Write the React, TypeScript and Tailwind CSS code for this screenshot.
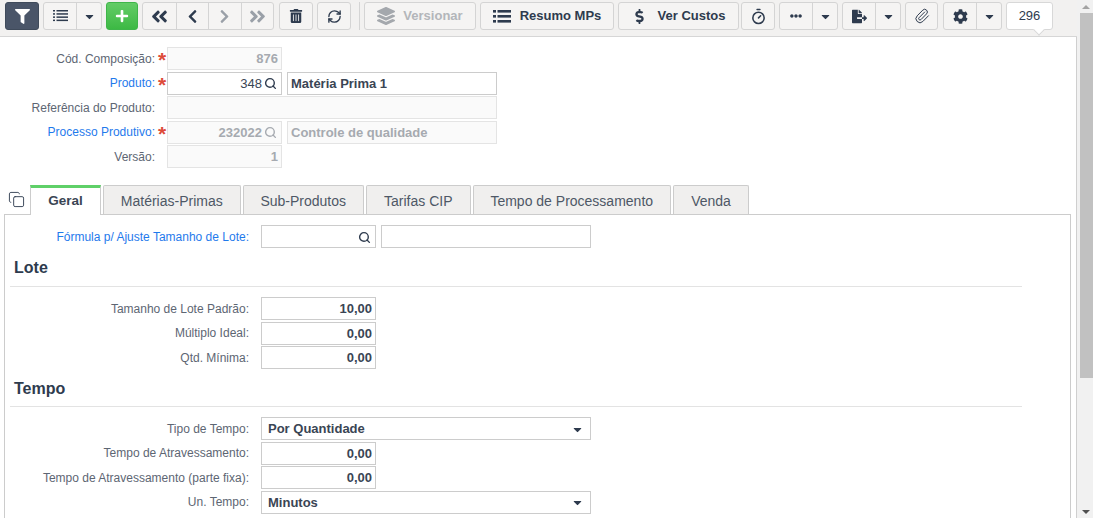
import React from "react";
import { FaFilter, FaPlus, FaAngleDoubleLeft, FaAngleDoubleRight, FaChevronLeft, FaChevronRight, FaTrashAlt, FaLayerGroup, FaDollarSign, FaEllipsisH, FaFileExport, FaCog, FaCaretDown } from "react-icons/fa";
import { Search, Timer, Paperclip, Copy, RefreshCw } from "lucide-react";

const DARK = "#2e3b4e";

function ListIcon({ w = 15, h = 12, sw = 1.5 }: { w?: number; h?: number; sw?: number }) {
  return (
    <svg width={w} height={h} viewBox="0 0 15 12" fill={DARK}>
      {[0, 3.2, 6.4, 9.6].map((y) => (
        <g key={y}>
          <rect x="0" y={y} width="2" height={sw} />
          <rect x="3.5" y={y} width="11.5" height={sw} />
        </g>
      ))}
    </svg>
  );
}

function ThickList() {
  return (
    <svg width="18" height="13" viewBox="0 0 18 13" fill={DARK}>
      {[0, 5, 10].map((y) => (
        <g key={y}>
          <rect x="0" y={y} width="3" height="2.6" />
          <rect x="4.5" y={y} width="13.5" height="2.6" />
        </g>
      ))}
    </svg>
  );
}

function Btn({ w, children, className = "" }: { w: string; children?: React.ReactNode; className?: string }) {
  return (
    <div className={`${w} h-[28px] flex items-center justify-center border border-[#d4d4d4] rounded-[3px] bg-[#f5f4f3] text-[#2e3b4e] ${className}`}>
      {children}
    </div>
  );
}

function Group({ items }: { items: { w: string; node: React.ReactNode }[] }) {
  return (
    <div className="h-[28px] flex border border-[#d4d4d4] rounded-[3px] bg-[#f5f4f3] text-[#2e3b4e]">
      {items.map((it, i) => (
        <div key={i} className={`${it.w} h-full flex items-center justify-center ${i > 0 ? "border-l border-[#d4d4d4]" : ""}`}>
          {it.node}
        </div>
      ))}
    </div>
  );
}

const caret = <FaCaretDown size={13} color={DARK} />;

function Toolbar() {
  return (
    <div className="h-[37px] bg-[#f2f1f0] border-b border-[#d6d6d6] flex items-start pt-[2px] pl-[5px] shrink-0">
      <Btn w="w-[34px]" className="!bg-[#4a5568] !border-[#3f4a5a]"><FaFilter size={15} color="#ffffff" /></Btn>
      <div className="ml-[4px]">
        <Group items={[{ w: "w-[32px]", node: <ListIcon /> }, { w: "w-[25px]", node: caret }]} />
      </div>
      <div className="ml-[4px] w-[32px] h-[28px] flex items-center justify-center rounded-[3px] border border-[#3fb54a] bg-gradient-to-b from-[#62cc66] to-[#3cb944]">
        <FaPlus size={14} color="#ffffff" />
      </div>
      <div className="ml-[4px]">
        <Group
          items={[
            { w: "w-[32.5px]", node: <FaAngleDoubleLeft size={19} color={DARK} /> },
            { w: "w-[32.5px]", node: <FaChevronLeft size={15} color={DARK} /> },
            { w: "w-[32.5px]", node: <FaChevronRight size={15} color="#9aa0a8" /> },
            { w: "w-[32.5px]", node: <FaAngleDoubleRight size={19} color="#9aa0a8" /> },
          ]}
        />
      </div>
      <Btn w="w-[34px]" className="ml-[5px]"><FaTrashAlt size={14} color={DARK} /></Btn>
      <Btn w="w-[34px]" className="ml-[4px]"><RefreshCw size={15} color={DARK} strokeWidth={2.2} /></Btn>
      <div className="ml-[8px] w-px h-[28px] bg-[#d4d4d4]" />
      <Btn w="w-[112px]" className="ml-[4px] gap-[8px]">
        <FaLayerGroup size={18} color="#a4a8ad" />
        <span className="text-[13px] font-bold text-[#b3b6ba]">Versionar</span>
      </Btn>
      <Btn w="w-[134px]" className="ml-[4px] gap-[9px]">
        <ThickList />
        <span className="text-[13px] font-bold">Resumo MPs</span>
      </Btn>
      <Btn w="w-[121px]" className="ml-[4px] gap-[11px]">
        <FaDollarSign size={15} color={DARK} />
        <span className="text-[13px] font-bold">Ver Custos</span>
      </Btn>
      <Btn w="w-[34px]" className="ml-[2px]"><Timer size={17} color={DARK} strokeWidth={2.2} /></Btn>
      <div className="ml-[4px]">
        <Group items={[{ w: "w-[32px]", node: <FaEllipsisH size={12} color={DARK} /> }, { w: "w-[25px]", node: caret }]} />
      </div>
      <div className="ml-[4px]">
        <Group items={[{ w: "w-[32px]", node: <FaFileExport size={15} color={DARK} /> }, { w: "w-[25px]", node: caret }]} />
      </div>
      <Btn w="w-[33px]" className="ml-[4px]"><Paperclip size={16} color={DARK} strokeWidth={1.5} /></Btn>
      <div className="ml-[5px]">
        <Group items={[{ w: "w-[32px]", node: <FaCog size={15} color={DARK} /> }, { w: "w-[25px]", node: caret }]} />
      </div>
      <div className="relative ml-[4px] w-[47px] h-[28px] bg-white border border-[#d8d8d8] rounded-[3px] flex items-center justify-center text-[13px] text-[#2e3b4e]">
        296
        <div className="absolute left-[28px] top-[23px] w-[8px] h-[8px] rotate-45 bg-white border-r border-b border-[#d8d8d8]" />
      </div>
    </div>
  );
}

function Star() {
  return <span className="text-[#dd4b39] text-[21px] font-bold leading-none w-[9px] h-[19px] ml-[3px] block">*</span>;
}

function Lbl({ text, w, blue, star }: { text: string; w: string; blue?: boolean; star?: boolean }) {
  return (
    <div className={`${w} shrink-0 flex justify-end items-center`}>
      <span className={`text-[12px] ${blue ? "text-[#1f7aec]" : "text-[#5d6673]"}`}>{text}:</span>
      {star !== undefined && (star ? <Star /> : <span className="w-[12px]" />)}
    </div>
  );
}

function Field({ w, value, left, disabled, search, className = "" }: { w: string; value?: string; left?: boolean; disabled?: boolean; search?: boolean; className?: string }) {
  return (
    <div
      className={`${w} h-full shrink-0 flex items-center border text-[13px] font-bold pt-[1px] ${left ? "justify-start pl-[3px]" : "justify-end pr-[3px]"} ${
        disabled ? "bg-[#fafafa] border-[#e4e4e4] text-[#a6aab0]" : "bg-white border-[#cccccc] text-[#3a4554]"
      } ${className}`}
    >
      <span>{value}</span>
      {search && <Search size={13} strokeWidth={2.6} className="ml-[2px] mr-[1px]" color={disabled ? "#a6aab0" : "#2e3b4e"} />}
    </div>
  );
}

function Select({ value }: { value: string }) {
  return (
    <div className="w-[330px] h-full flex items-center justify-between border border-[#cccccc] bg-white pt-[1px] pl-[6px] pr-[6px] text-[13px] font-bold text-[#3a4554]">
      <span>{value}</span>
      <FaCaretDown size={13} color={DARK} />
    </div>
  );
}

function TopForm() {
  const row = "flex h-[23px] mb-[1.5px]";
  return (
    <div className="pt-[10px] h-[147px] shrink-0">
      <div className={row}>
        <Lbl w="w-[167px]" text="Cód. Composição" star />
        <Field w="w-[115px]" value="876" disabled />
      </div>
      <div className={row}>
        <Lbl w="w-[167px]" text="Produto" blue star />
        <Field w="w-[115px]" value="348" search className="!font-normal" />
        <Field w="w-[210px]" value="Matéria Prima 1" left className="ml-[5px]" />
      </div>
      <div className={row}>
        <Lbl w="w-[167px]" text="Referência do Produto" star={false} />
        <Field w="w-[330px]" disabled />
      </div>
      <div className={row}>
        <Lbl w="w-[167px]" text="Processo Produtivo" blue star />
        <Field w="w-[115px]" value="232022" search disabled />
        <Field w="w-[210px]" value="Controle de qualidade" left disabled className="ml-[5px]" />
      </div>
      <div className={row}>
        <Lbl w="w-[167px]" text="Versão" star={false} />
        <Field w="w-[115px]" value="1" disabled />
      </div>
    </div>
  );
}

function Tab({ w, text, active }: { w: string; text: string; active?: boolean }) {
  return active ? (
    <div className={`${w} h-[30px] -mb-px bg-white border-x border-[#cccccc] border-t-[3px] border-t-[#5fd068] flex items-center justify-center text-[13.5px] font-bold text-[#3a4554] z-10`}>
      {text}
    </div>
  ) : (
    <div className={`${w} h-[29px] pt-[2px] bg-[#f0efee] border border-b-0 border-[#cccccc] rounded-t-[2px] flex items-center justify-center text-[14px] text-[#4e5866]`}>
      {text}
    </div>
  );
}

function Heading({ text, h }: { text: string; h: string }) {
  return (
    <div className={`ml-[5px] w-[1012px] ${h} border-b border-[#e3e3e3] pl-[4px] text-[16px] leading-[26px] font-bold text-[#2e3b4e]`}>
      {text}
    </div>
  );
}

function PanelRow({ label, blue, children }: { label: string; blue?: boolean; children: React.ReactNode }) {
  return (
    <div className="flex h-[23px] mb-[1.5px]">
      <div className="w-[244px] shrink-0 flex justify-end items-center">
        <span className={`text-[12px] ${blue ? "text-[#1f7aec]" : "text-[#5d6673]"}`}>{label}:</span>
      </div>
      <div className="ml-[12px] flex h-full">{children}</div>
    </div>
  );
}

export default function App() {
  return (
    <div className="w-[1093px] h-[518px] overflow-hidden flex bg-white font-['Liberation_Sans',Arial,sans-serif]">
      <div className="w-[1077px] h-full flex flex-col shrink-0 relative">
        <Toolbar />
        <div className="flex-1 border-r border-[#cfcfcf] flex flex-col min-h-0">
          <TopForm />
          <div className="flex items-end h-[30px] pl-[4px] shrink-0">
            <div className="w-[26px] h-[29px] flex items-start pt-[6px] pl-[4px]">
              <Copy size={17} color={DARK} strokeWidth={1.3} />
            </div>
            <Tab w="w-[71px]" text="Geral" active />
            <div className="ml-[2px] flex gap-[2.5px] items-end">
              <Tab w="w-[137.5px]" text="Matérias-Primas" />
              <Tab w="w-[120.5px]" text="Sub-Produtos" />
              <Tab w="w-[104.5px]" text="Tarifas CIP" />
              <Tab w="w-[197.5px]" text="Tempo de Processamento" />
              <Tab w="w-[76px]" text="Venda" />
            </div>
          </div>
          <div className="ml-[4px] w-[1067px] flex-1 border border-b-0 border-[#cccccc] pt-[10px] min-h-0 overflow-hidden">
            <PanelRow label="Fórmula p/ Ajuste Tamanho de Lote" blue>
              <Field w="w-[115px]" search />
              <Field w="w-[210px]" className="ml-[5px]" />
            </PanelRow>
            <div className="mt-[7px]">
              <Heading text="Lote" h="h-[32px]" />
            </div>
            <div className="mt-[10px]">
              <PanelRow label="Tamanho de Lote Padrão"><Field w="w-[115px]" value="10,00" /></PanelRow>
              <PanelRow label="Múltiplo Ideal"><Field w="w-[115px]" value="0,00" /></PanelRow>
              <PanelRow label="Qtd. Mínima"><Field w="w-[115px]" value="0,00" /></PanelRow>
            </div>
            <div className="mt-[7px]">
              <Heading text="Tempo" h="h-[31px]" />
            </div>
            <div className="mt-[10px]">
              <PanelRow label="Tipo de Tempo"><Select value="Por Quantidade" /></PanelRow>
              <PanelRow label="Tempo de Atravessamento"><Field w="w-[115px]" value="0,00" /></PanelRow>
              <PanelRow label="Tempo de Atravessamento (parte fixa)"><Field w="w-[115px]" value="0,00" /></PanelRow>
              <PanelRow label="Un. Tempo"><Select value="Minutos" /></PanelRow>
            </div>
          </div>
        </div>
      </div>
      <div className="w-[16px] h-full bg-[#f1f1f1] flex flex-col items-center shrink-0 pl-[2px]">
        <div className="h-[13px] flex items-center justify-center">
          <div className="w-0 h-0 border-x-[4px] border-x-transparent border-b-[4px] border-b-[#a3a3a3]" />
        </div>
        <div className="w-[13px] h-[365px] bg-[#c1c1c1]" />
        <div className="flex-1" />
        <div className="h-[13px] flex items-center justify-center">
          <div className="w-0 h-0 border-x-[4px] border-x-transparent border-t-[4px] border-t-[#505050]" />
        </div>
      </div>
    </div>
  );
}
